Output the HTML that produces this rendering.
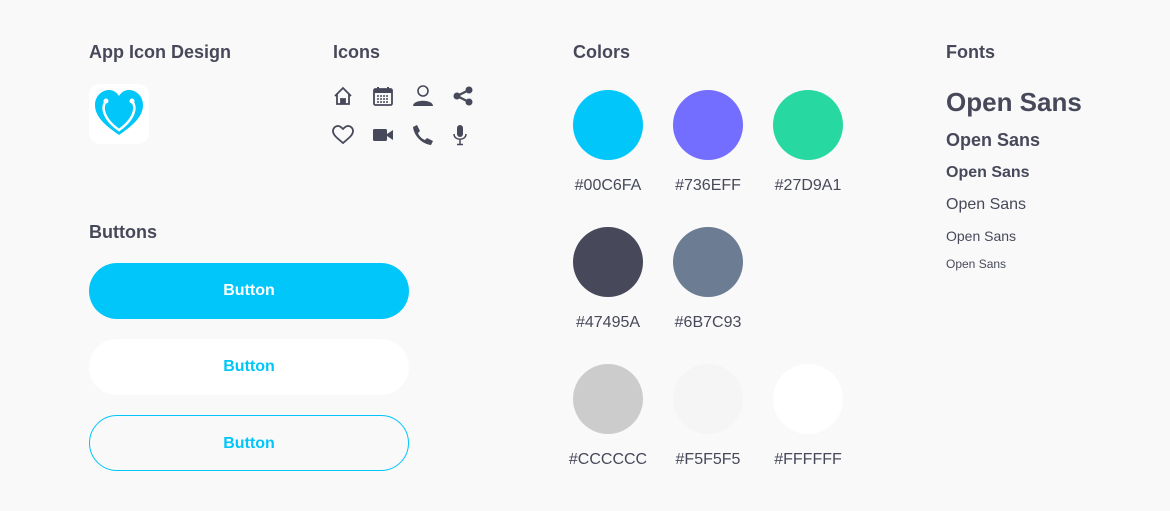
<!DOCTYPE html>
<html><head><style>
body{margin:0;width:1170px;height:511px;background:#f9f9f9;font-family:"Liberation Sans",sans-serif;color:#47495A;position:relative;overflow:hidden}
.a{position:absolute;white-space:nowrap}
.h{font-size:18px;font-weight:bold;line-height:20px}
.btn{position:absolute;left:89px;width:320px;height:56px;border-radius:28px;box-sizing:border-box;text-align:center;line-height:56px;font-size:16px;font-weight:bold}
.c{position:absolute;width:70px;height:70px;border-radius:50%}
.l{position:absolute;width:120px;text-align:center;font-size:16px;color:#47495A}
svg.i{position:absolute;width:22px;height:22px}
</style></head><body>
<div class="a h" style="left:89px;top:42px">App Icon Design</div>
<div class="a h" style="left:333px;top:42px">Icons</div>
<div class="a h" style="left:573px;top:42px">Colors</div>
<div class="a h" style="left:946px;top:42px">Fonts</div>
<div class="a h" style="left:89px;top:222px">Buttons</div>

<div class="a" style="left:89px;top:84px;width:60px;height:60px;background:#fff;border-radius:11px"></div>
<svg class="a" style="left:92px;top:87px" width="54" height="54" viewBox="0 0 54 54">
<path d="M27 48 C14 39 3 30 3 18 C3 9 10 3 17 3 C22 3 25 6 27 9 C29 6 32 3 37 3 C44 3 51 9 51 18 C51 30 40 39 27 48Z" fill="#00C6FA"/>
<path d="M14 14 C8 22 14 34 27 43 C40 34 46 22 40 14" fill="none" stroke="#fff" stroke-width="2.5"/>
<circle cx="14" cy="14" r="2.5" fill="#fff"/><circle cx="40" cy="14" r="2.5" fill="#fff"/>
</svg>

<svg class="i" style="left:332px;top:85px" viewBox="0 0 22 22"><path d="M3 11 L11 3 L19 11 M5 9 V19 H17 V9 M9 19 V14 H13 V19" fill="none" stroke="#47495A" stroke-width="1.8"/><rect x="9" y="14" width="4" height="5" fill="#47495A"/></svg>
<svg class="i" style="left:372px;top:85px" viewBox="0 0 22 22"><rect x="2" y="4" width="18" height="16" rx="1.5" fill="none" stroke="#47495A" stroke-width="1.8"/><rect x="2" y="4" width="18" height="4" fill="#47495A"/><path d="M6 2v4M16 2v4" stroke="#47495A" stroke-width="2"/><path d="M5 11h12M5 14h12M5 17h12" stroke="#47495A" stroke-width="1.6" stroke-dasharray="2 1"/></svg>
<svg class="i" style="left:412px;top:84px" viewBox="0 0 22 22"><circle cx="11" cy="7" r="5" fill="none" stroke="#47495A" stroke-width="1.6"/><path d="M1 22 C1 15 21 15 21 22Z" fill="#47495A"/></svg>
<svg class="i" style="left:452px;top:85px" viewBox="0 0 22 22"><path d="M5 11 L17 5 M5 11 L17 17" stroke="#47495A" stroke-width="2.2"/><circle cx="5" cy="11" r="3.5" fill="#47495A"/><circle cx="17" cy="5" r="3.5" fill="#47495A"/><circle cx="17" cy="17" r="3.5" fill="#47495A"/></svg>
<svg class="i" style="left:332px;top:124px" viewBox="0 0 22 22"><path d="M11 19 C5 14 1 11 1 7 C1 4 3.5 2 6 2 C8.5 2 10 4 11 5 C12 4 13.5 2 16 2 C18.5 2 21 4 21 7 C21 11 17 14 11 19Z" fill="none" stroke="#47495A" stroke-width="1.8"/></svg>
<svg class="i" style="left:372px;top:124px" viewBox="0 0 22 22"><rect x="1" y="5" width="14" height="12" rx="1.5" fill="#47495A"/><path d="M15 10 L21 6 V16 L15 12Z" fill="#47495A"/></svg>
<svg class="i" style="left:412px;top:124px" viewBox="0 0 22 22"><path d="M5 1 L8 7 L6 9 C7 12 10 15 13 16 L15 14 L21 17 L19 21 C10 20 2 12 1 3Z" fill="#47495A"/></svg>
<svg class="i" style="left:449px;top:124px" viewBox="0 0 22 22"><rect x="8" y="1" width="6" height="12" rx="3" fill="#47495A"/><path d="M5 10 C5 17 17 17 17 10 M11 16 V20 M8 20.5 H14" fill="none" stroke="#47495A" stroke-width="1.5"/></svg>

<div class="btn" style="top:263px;background:#00C6FA;color:#fff">Button</div>
<div class="btn" style="top:339px;background:#fff;color:#00C6FA">Button</div>
<div class="btn" style="top:415px;border:1px solid #00C6FA;color:#00C6FA">Button</div>

<div class="c" style="left:573px;top:90px;background:#00C6FA"></div>
<div class="c" style="left:673px;top:90px;background:#736EFF"></div>
<div class="c" style="left:773px;top:90px;background:#27D9A1"></div>
<div class="c" style="left:573px;top:227px;background:#47495A"></div>
<div class="c" style="left:673px;top:227px;background:#6B7C93"></div>
<div class="c" style="left:573px;top:364px;background:#CCCCCC"></div>
<div class="c" style="left:673px;top:364px;background:#F5F5F5"></div>
<div class="c" style="left:773px;top:364px;background:#FFFFFF"></div>
<div class="l" style="left:548px;top:177px">#00C6FA</div>
<div class="l" style="left:648px;top:177px">#736EFF</div>
<div class="l" style="left:748px;top:177px">#27D9A1</div>
<div class="l" style="left:548px;top:314px">#47495A</div>
<div class="l" style="left:648px;top:314px">#6B7C93</div>
<div class="l" style="left:548px;top:451px">#CCCCCC</div>
<div class="l" style="left:648px;top:451px">#F5F5F5</div>
<div class="l" style="left:748px;top:451px">#FFFFFF</div>

<div class="a" style="left:946px;top:87px;font-size:26px;font-weight:bold">Open Sans</div>
<div class="a" style="left:946px;top:130px;font-size:18px;font-weight:bold">Open Sans</div>
<div class="a" style="left:946px;top:164px;font-size:16px;font-weight:bold">Open Sans</div>
<div class="a" style="left:946px;top:196px;font-size:16px">Open Sans</div>
<div class="a" style="left:946px;top:228px;font-size:14px">Open Sans</div>
<div class="a" style="left:946px;top:257px;font-size:12px">Open Sans</div>
</body></html>
